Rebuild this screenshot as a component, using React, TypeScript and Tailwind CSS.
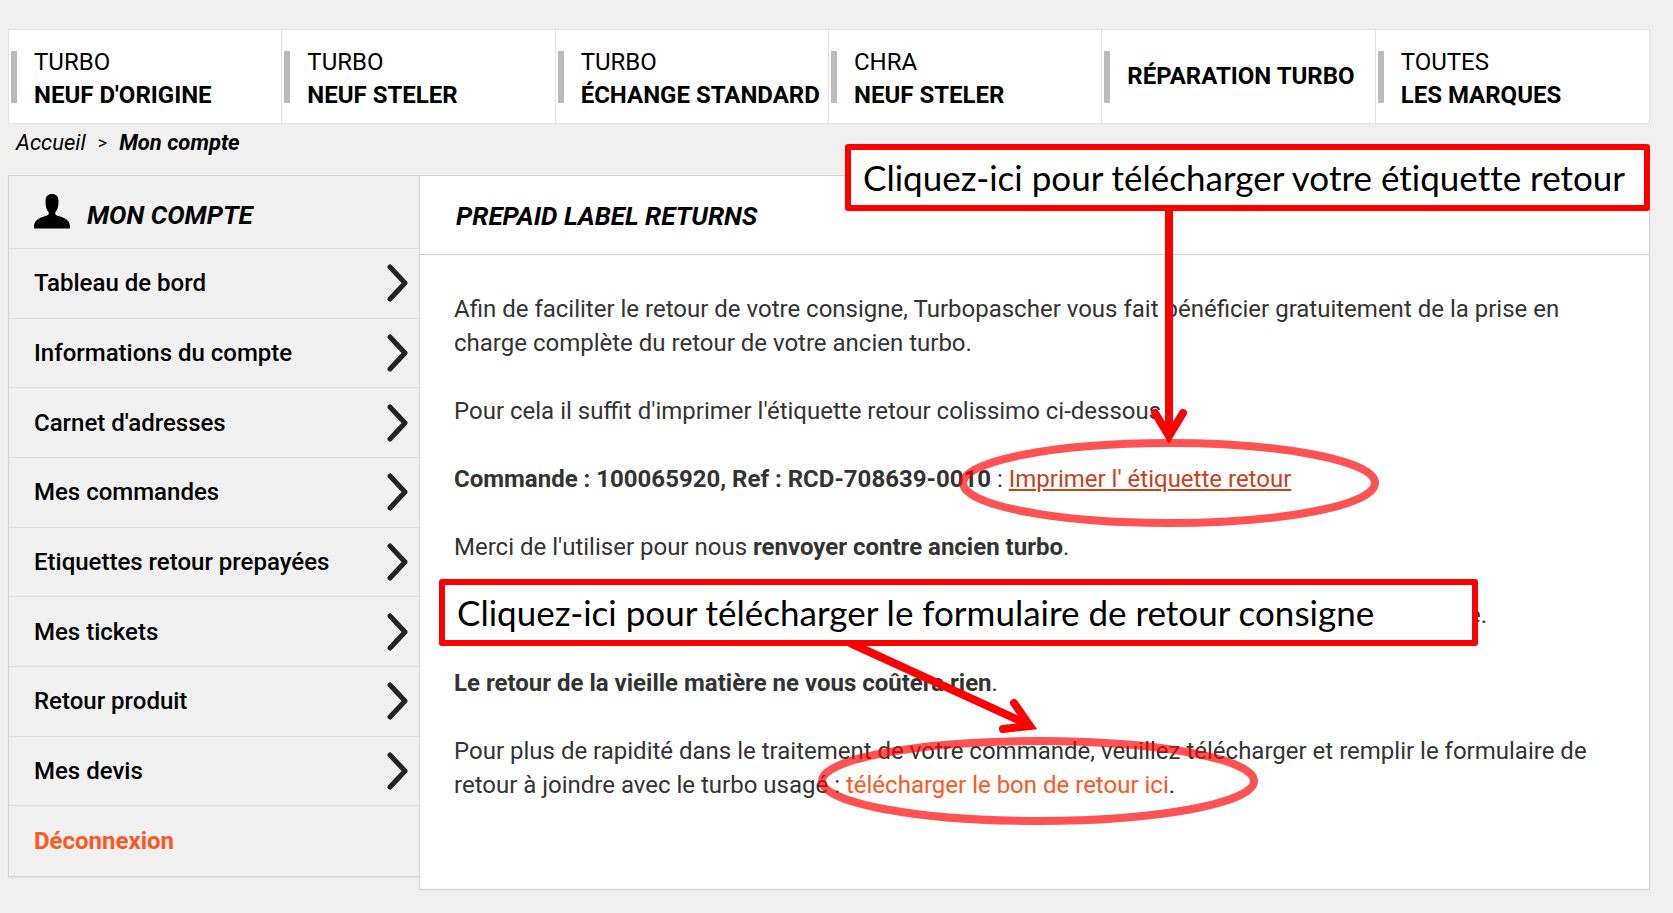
import React from 'react';

interface NavItem {
  top?: string;
  bottom: string;
}

const navItems: NavItem[] = [
  { top: 'TURBO', bottom: "NEUF D'ORIGINE" },
  { top: 'TURBO', bottom: 'NEUF STELER' },
  { top: 'TURBO', bottom: 'ÉCHANGE STANDARD' },
  { top: 'CHRA', bottom: 'NEUF STELER' },
  { bottom: 'RÉPARATION TURBO' },
  { top: 'TOUTES', bottom: 'LES MARQUES' },
];

const accountLinks = [
  'Tableau de bord',
  'Informations du compte',
  "Carnet d'adresses",
  'Mes commandes',
  'Etiquettes retour prepayées',
  'Mes tickets',
  'Retour produit',
  'Mes devis',
];

const UserIcon = () => (
  <svg viewBox="0 0 36 36" className="h-9 w-9 shrink-0" aria-hidden="true">
    <path
      d="M18 0C22 0 24.500 2.500 24.500 7C24.500 12 23.800 15.500 21.500 18C21 19 21.200 20.500 22 21C23.500 22 27 22.500 30 24C34.500 26 36 29 36 33C36 34 35.600 34.500 35 34.500H1C0.400 34.500 0 34 0 33C0 29 1.500 26 6 24C9 22.500 12.500 22 14 21C14.800 20.500 15 19 14.500 18C12.200 15.500 11.500 12 11.500 7C11.500 2.500 14 0 18 0Z"
      fill="#000"
    />
  </svg>
);

const ChevronIcon = () => (
  <svg viewBox="0 0 22 38" className="h-[38px] w-[22px] shrink-0" fill="none" aria-hidden="true">
    <path d="M3 3L18 19L3 35" stroke="#222" strokeWidth="5" strokeLinecap="round" strokeLinejoin="round" />
  </svg>
);

const TopNav = () => (
  <nav className="grid grid-cols-6 border border-[#e2e2e2] bg-white">
    {navItems.map((item, i) => (
      <a
        key={i}
        href="#"
        className="flex h-[93px] items-center gap-[17px] border-r border-[#e2e2e2] pl-[2px] whitespace-nowrap last:border-r-0"
      >
        <span className="h-[52px] w-[6px] shrink-0 bg-[#bbb]" />
        {item.top ? (
          <span className="flex flex-col pt-1 text-[24px] leading-[33px]">
            <span>{item.top}</span>
            <span className="font-bold">{item.bottom}</span>
          </span>
        ) : (
          <span className="text-[24px] leading-[33px] font-bold">{item.bottom}</span>
        )}
      </a>
    ))}
  </nav>
);

const Sidebar = () => (
  <aside className="w-[411px] shrink-0 border border-r-0 border-[#d2d2d2] bg-[#f1f1f1] shadow-xs">
    <h2 className="flex h-[73px] items-center gap-[17px] border-b border-[#dedede] pl-[25px] text-[26px] font-bold italic">
      <UserIcon />
      <span className="pt-[6px]">MON COMPTE</span>
    </h2>
    <ul className="grid h-[627px] auto-rows-fr divide-y divide-[#dedede]">
      {accountLinks.map((label) => (
        <li key={label}>
          <a href="#" className="flex h-full items-center justify-between pr-[10px] pl-[25px] text-[24px] font-medium">
            {label}
            <ChevronIcon />
          </a>
        </li>
      ))}
      <li>
        <a href="#" className="flex h-full items-center pl-[25px] text-[24px] font-bold text-[#ff5722]">
          Déconnexion
        </a>
      </li>
    </ul>
  </aside>
);

const Callout: React.FC<{ className: string; children: React.ReactNode }> = ({ className, children }) => (
  <div
    className={`absolute flex h-[67px] items-center rounded-[3px] border-[6px] border-[#f00] bg-white pl-3 font-['Lato','Liberation_Sans',sans-serif] text-[35px] whitespace-nowrap text-black [font-variant-ligatures:none] ${className}`}
  >
    {children}
  </div>
);

// Arrows and circles share the page's origin
const Annotations = () => (
  <>
    <svg width="1673" height="913" className="pointer-events-none absolute top-0 left-0" fill="none" stroke="#f00" strokeWidth="8" aria-hidden="true">
      <ellipse cx="1169" cy="483" rx="206" ry="40" strokeOpacity="0.68" />
      <ellipse cx="1038" cy="781" rx="216" ry="40" strokeOpacity="0.68" />
      <path d="M1169 205V434" />
      <path d="M1155 413L1169 436L1183 413" strokeLinecap="round" strokeLinejoin="miter" />
      <path d="M850 643L1029 725" />
      <path d="M1014 703L1030 726L1003 729" strokeLinecap="round" strokeLinejoin="miter" />
    </svg>
    <Callout className="top-[144px] left-[845px] w-[805px]">Cliquez-ici pour télécharger votre étiquette retour</Callout>
    <Callout className="top-[579px] left-[439px] w-[1039px]">Cliquez-ici pour télécharger le formulaire de retour consigne</Callout>
  </>
);

export default function App() {
  return (
    <div className="relative min-h-screen bg-[#f0f0f0] pt-[29px] pr-[23px] pb-[22px] pl-2 font-['Roboto','Liberation_Sans',sans-serif] text-black">
      <TopNav />

      <div className="flex h-[51px] items-start gap-3 pt-1 pl-2 text-[22px] leading-[30px] italic">
        <a href="#">Accueil</a>
        <span className="text-[18px] not-italic">&gt;</span>
        <span className="font-bold">Mon compte</span>
      </div>

      <div className="flex items-start">
        <Sidebar />
        <main className="min-w-0 flex-1 border border-[#d2d2d2] bg-white">
          <h1 className="flex h-[79px] items-center border-b border-[#d2d2d2] pt-[2px] pl-9 text-[26px] font-bold italic">
            PREPAID LABEL RETURNS
          </h1>
          <div className="space-y-[34px] px-[34px] pt-[37px] pb-[87px] text-[24px] leading-[34px] text-[#333]">
            <p>
              Afin de faciliter le retour de votre consigne, Turbopascher vous fait bénéficier gratuitement de la prise en
              charge complète du retour de votre ancien turbo.
            </p>
            <p>Pour cela il suffit d'imprimer l'étiquette retour colissimo ci-dessous :</p>
            <p>
              <strong>Commande : 100065920, Ref : RCD-708639-0010</strong> :{' '}
              <a href="#" className="text-[#c7421b] underline">Imprimer l' étiquette retour</a>
            </p>
            <p>
              Merci de l'utiliser pour nous <strong>renvoyer contre ancien turbo</strong>.
            </p>
            <p className="pl-[1014px]">e.</p>
            <p>
              <strong>Le retour de la vieille matière ne vous coûtera rien</strong>.
            </p>
            <p>
              Pour plus de rapidité dans le traitement de votre commande, veuillez télécharger et remplir le formulaire de
              retour à joindre avec le turbo usagé : <a href="#" className="text-[#ff5722]">télécharger le bon de retour ici</a>.
            </p>
          </div>
        </main>
      </div>

      <Annotations />
    </div>
  );
}
